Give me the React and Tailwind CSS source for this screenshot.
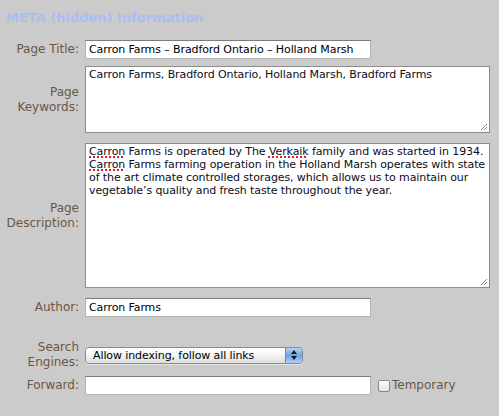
import React from "react";

const font = { fontFamily: '"DejaVu Sans", Verdana, sans-serif' };

function Label({ children }) {
  return (
    <div className="w-[80px] shrink-0 text-right pr-[1px] text-[12px] leading-[15px] text-[#6b5744]">
      {children}
    </div>
  );
}

function TextInput({ value, w = "w-[286px]" }) {
  return (
    <div
      className={`${w} h-[19px] bg-white border border-[#b4b4b4] border-t-[#7c7c7c] px-[3px] text-[11px] tracking-[-0.1px] leading-[17px] text-black whitespace-nowrap overflow-hidden`}
    >
      {value}
    </div>
  );
}

function Grip() {
  return (
    <svg className="absolute right-[1px] bottom-[1px]" width="9" height="9" viewBox="0 0 9 9">
      <line x1="8" y1="2" x2="2" y2="8" stroke="#8a8a8a" strokeWidth="1" />
      <line x1="8" y1="5" x2="5" y2="8" stroke="#8a8a8a" strokeWidth="1" />
    </svg>
  );
}

const Sp = ({ children }) => (
  <span className="underline decoration-dotted decoration-[#e02020] decoration-[1.5px] underline-offset-[1px]">
    {children}
  </span>
);

export default function App() {
  return (
    <div style={font} className="w-[499px] h-[416px] bg-[#cbcbcb] overflow-hidden relative">
      <div className="pl-[6px] pt-[10px] h-[40px] text-[13px] leading-[16px] font-bold text-[#a9bef4]">
        META (hidden) Information
      </div>

      <div className="flex items-center gap-[5px]">
        <Label>Page Title:</Label>
        <TextInput value="Carron Farms – Bradford Ontario – Holland Marsh" />
      </div>

      <div className="flex items-center gap-[5px] mt-[7px]">
        <Label>
          Page
          <br />
          Keywords:
        </Label>
        <div className="relative w-[405px] h-[67px] bg-white border border-[#8c8c8c] px-[3px] pt-[1px] text-[11px] tracking-[-0.1px] leading-[13px] text-[#0c0c20]">
          Carron Farms, Bradford Ontario, Holland Marsh, Bradford Farms
          <Grip />
        </div>
      </div>

      <div className="flex items-center gap-[5px] mt-[10px]">
        <Label>
          Page
          <br />
          Description:
        </Label>
        <div className="relative w-[405px] h-[145px] bg-white border border-[#8c8c8c] px-[3px] pt-[1px] text-[11px] tracking-[-0.1px] leading-[13px] text-[#0c0c20]">
          <Sp>Carron</Sp> Farms is operated by The <Sp>Verkaik</Sp> family and was started in 1934.{" "}
          <Sp>Carron</Sp> Farms farming operation in the Holland Marsh operates with state of the art
          climate controlled storages, which allows us to maintain our vegetable’s quality and fresh
          taste throughout the year.
          <Grip />
        </div>
      </div>

      <div className="flex items-center gap-[5px] mt-[10px]">
        <Label>Author:</Label>
        <TextInput value="Carron Farms" />
      </div>

      <div className="flex items-center gap-[5px] mt-[23px]">
        <Label>
          Search
          <br />
          Engines:
        </Label>
        <div className="flex w-[218px] h-[17px] rounded-[4px] border border-[#8a8a8a] overflow-hidden shadow-[0_1px_0_rgba(255,255,255,0.5)]">
          <div className="flex-1 bg-gradient-to-b from-white via-[#f4f4f4] to-[#dcdcdc] pl-[7px] text-[11px] tracking-[-0.1px] leading-[15px] text-black whitespace-nowrap">
            Allow indexing, follow all links
          </div>
          <div className="w-[17px] bg-gradient-to-b from-[#b6d2f4] via-[#6ea4e8] to-[#a9d0f8] border-l border-[#6a8cc0] flex flex-col items-center justify-center gap-[2px]">
            <svg width="6" height="4" viewBox="0 0 6 4"><polygon points="3,0 6,4 0,4" fill="#1a1a1a" /></svg>
            <svg width="6" height="4" viewBox="0 0 6 4"><polygon points="0,0 6,0 3,4" fill="#1a1a1a" /></svg>
          </div>
        </div>
      </div>

      <div className="flex items-center gap-[5px] mt-[6px]">
        <Label>Forward:</Label>
        <TextInput value="" />
        <div className="flex items-center ml-[2px]">
          <div className="w-[12px] h-[12px] rounded-[2px] border border-[#8a8a8a] bg-gradient-to-b from-white to-[#e2e2e2]" />
          <span className="ml-[2px] text-[12px] leading-[15px] text-[#6b5744]">Temporary</span>
        </div>
      </div>
    </div>
  );
}
